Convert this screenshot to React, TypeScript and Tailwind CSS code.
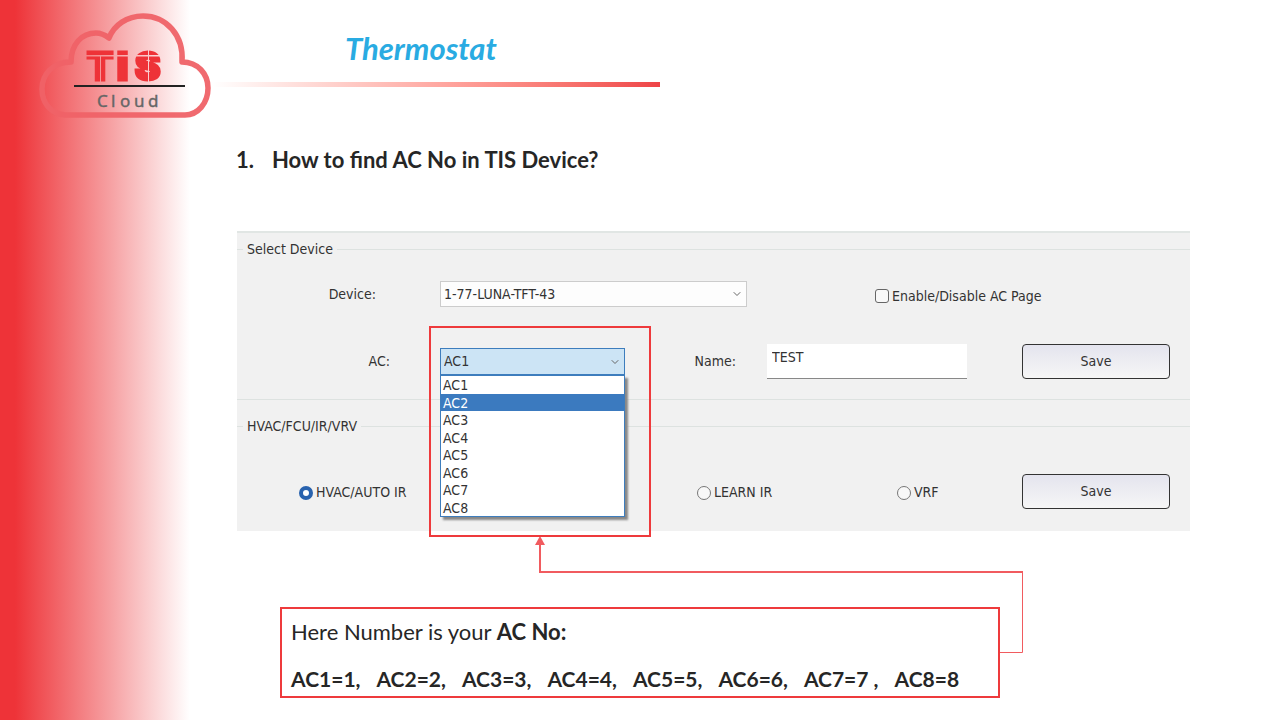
import { ChevronDown } from "lucide-react";

const AC_OPTIONS = ["AC1", "AC2", "AC3", "AC4", "AC5", "AC6", "AC7", "AC8"];
const AC_NUMBERS = ["AC1=1,", "AC2=2,", "AC3=3,", "AC4=4,", "AC5=5,", "AC6=6,", "AC7=7 ,", "AC8=8"];

function Logo() {
  return (
    <svg viewBox="38 12 174 108" className="h-[108px] w-[174px] shrink-0" role="img" aria-label="TIS Cloud">
      <defs>
        <mask id="stencil" maskUnits="userSpaceOnUse" x="80" y="40" width="90" height="50">
          <rect x="80" y="40" width="90" height="50" fill="#fff" />
          <rect x="80" y="55" width="90" height="1.5" fill="#000" />
          <rect x="100" y="56" width="1" height="30" fill="#000" />
          <rect x="148" y="50" width="1" height="35" fill="#000" />
        </mask>
      </defs>
      <path
        d="M65 115 C51 114 42 103 42 89 C42 74 53 62 71 62 C71 44 82 33 96 33 C101 33 105 35 109 38 C114 25 127 16 143 16 C166 16 184 35 182 62 C198 62 208 74 208 88 C208 103 198 115 185 115 Z"
        fill="none"
        stroke="#ef6267"
        strokeOpacity="0.95"
        strokeWidth="5.5"
        strokeLinejoin="round"
      />
      <text
        x="87 117 135"
        y="80"
        mask="url(#stencil)"
        fill="#ee3338"
        stroke="#ee3338"
        strokeWidth="3"
        fontFamily="Inter, sans-serif"
        fontWeight="900"
        fontSize="38"
      >
        TIS
      </text>
      <rect x="74" y="85" width="111" height="2" fill="#222" />
      <text x="97 111 120 134 148" y="107" fill="#666" stroke="#666" strokeWidth="0.4" fontFamily="'Noto Sans', sans-serif" fontSize="17">
        Cloud
      </text>
    </svg>
  );
}

function SaveButton() {
  return (
    <button
      type="button"
      className="h-[35px] w-full rounded-[4px] border border-[#333] bg-linear-to-b from-[#e4e4ee] to-[#f6f6f6]"
    >
      Save
    </button>
  );
}

function Radio({ label, checked = false }: { label: string; checked?: boolean }) {
  return (
    <label className="flex items-center gap-[3px] whitespace-nowrap">
      <input
        type="radio"
        name="mode"
        defaultChecked={checked}
        className="size-[14px] appearance-none rounded-full border border-[#777] bg-[#f8f8f8] checked:border-4 checked:border-[#2862ae] checked:bg-white"
      />
      {label}
    </label>
  );
}

export default function App() {
  return (
    <div className="min-h-screen bg-[linear-gradient(to_right,#ee3338_0px,#ee3338_15px,#f15b5f_50px,#f6a0a2_110px,#fff_190px)] font-['Lato',sans-serif] text-[#262626]">
      <header className="flex pt-3 pl-[38px]">
        <Logo />
        <div className="w-[448px] pt-4">
          <h1 className="pl-[133px] text-[31px] leading-10 font-bold text-[#29abe2] italic">Thermostat</h1>
          <div className="mt-[14px] h-[5px] bg-linear-to-r from-white to-[#ee4347]" />
        </div>
      </header>

      <main className="pr-[90px] pl-[236px]">
        <h2 className="flex pt-6 text-[22px] leading-8 font-bold">
          <span className="w-9">1.</span>
          How to find AC No in TIS Device?
        </h2>

        <form className="mt-[55px] ml-px h-[300px] border-t-2 border-[#e1e6e4] bg-[#f1f1f1] font-['DejaVu_Sans_Condensed','DejaVu_Sans',sans-serif] text-[14px] text-[#333]">
          <fieldset className="mt-2 h-[159px] min-w-0 border-y border-[#dde2e0]">
            <legend className="ml-[6px] px-1 leading-4">Select Device</legend>
            <div className="grid grid-cols-[203fr_185fr_142fr_200fr_55fr_148fr] items-center gap-y-[37px] pt-6 pr-5">
              <label htmlFor="device" className="pr-16 text-right">
                Device:
              </label>
              <div className="relative col-span-2 mr-5">
                <select id="device" className="h-[26px] w-full appearance-none border border-[#ccc] bg-[#fdfdfd] px-[3px]">
                  <option>1-77-LUNA-TFT-43</option>
                </select>
                <ChevronDown className="pointer-events-none absolute top-[7px] right-1 size-3 text-[#666]" strokeWidth={2} />
              </div>
              <label className="col-span-3 flex items-center gap-[3px] pt-1 pl-[108px]">
                <input type="checkbox" className="size-[14px] appearance-none rounded-[3px] border border-[#666] bg-[#f8f8f8]" />
                Enable/Disable AC Page
              </label>

              <label htmlFor="ac" className="pr-[50px] text-right">
                AC:
              </label>
              <div className="relative">
                <select id="ac" className="h-[27px] w-full appearance-none border border-[#3d7dbd] bg-[#cce4f5] px-[3px]">
                  <option>AC1</option>
                </select>
                <ChevronDown className="pointer-events-none absolute top-2 right-1 size-3 text-[#666]" strokeWidth={2} />
                <ul
                  role="listbox"
                  aria-label="AC"
                  className="absolute top-[27px] left-0 z-10 grid h-[142px] w-full grid-rows-8 border border-[#3d7dbd] bg-white shadow-[3px_3px_2px_#888]"
                >
                  {AC_OPTIONS.map((name) => (
                    <li
                      key={name}
                      role="option"
                      aria-selected={name === "AC2"}
                      className="px-[2px] leading-[18px] aria-selected:bg-[#3b7abf] aria-selected:text-white"
                    >
                      {name}
                    </li>
                  ))}
                </ul>
                <div className="pointer-events-none absolute -top-[22px] -right-[26px] -left-[11px] z-20 h-[211px] border-2 border-[#ee3a3c]" />
              </div>
              <label htmlFor="name" className="pr-[31px] text-right">
                Name:
              </label>
              <input
                id="name"
                type="text"
                defaultValue="TEST"
                className="h-[35px] w-full border-b border-[#888] bg-white px-[5px] pb-2"
              />
              <div className="col-start-6">
                <SaveButton />
              </div>
            </div>
          </fieldset>

          <fieldset className="mt-[18px] min-w-0 border-t border-[#dde2e0]">
            <legend className="ml-[6px] px-1 leading-4">HVAC/FCU/IR/VRV</legend>
            <div className="grid grid-cols-[398fr_200fr_187fr_148fr] items-center pt-10 pr-5">
              <div className="pt-[2px] pl-[62px]">
                <Radio label="HVAC/AUTO IR" checked />
              </div>
              <div className="pt-[2px] pl-[62px]">
                <Radio label="LEARN IR" />
              </div>
              <div className="pt-[2px] pl-[62px]">
                <Radio label="VRF" />
              </div>
              <SaveButton />
            </div>
          </fieldset>
        </form>

        <section className="relative mt-[76px] ml-[44px] w-[720px] border-2 border-[#ee3a3c] px-[9px] pt-[7px] pb-px text-[22px] leading-8">
          <p>
            Here Number is your <strong>AC No:</strong>
          </p>
          <p className="mt-[15px] flex gap-4 text-[21px] font-bold whitespace-nowrap">
            {AC_NUMBERS.map((text) => (
              <span key={text}>{text}</span>
            ))}
          </p>
          <svg viewBox="0 0 490 120" className="pointer-events-none absolute -top-[74px] left-[253px] h-[120px] w-[490px]" aria-hidden="true">
            <path d="M5 8 V37 H488" fill="none" stroke="#f15b5f" strokeWidth="2" />
            <path d="M487.5 36 V117.5 H465" fill="none" stroke="#f15b5f" strokeWidth="1" />
            <path d="M5 1 L10 10 H0 Z" fill="#f15b5f" />
          </svg>
        </section>
      </main>
    </div>
  );
}
